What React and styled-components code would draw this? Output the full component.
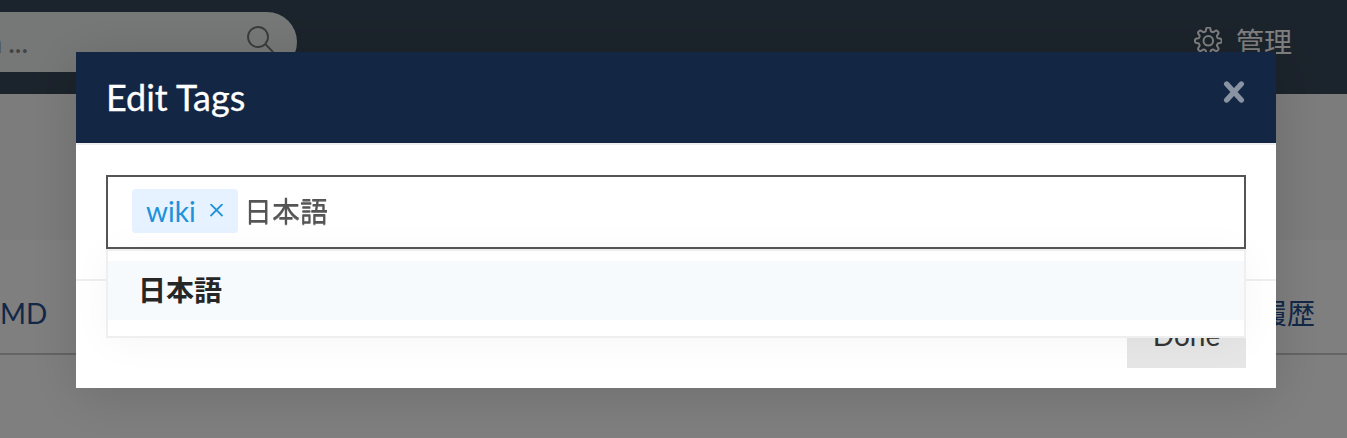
import React from 'react';
import styled, { createGlobalStyle } from 'styled-components';

const GlobalStyle = createGlobalStyle`
  * { box-sizing: border-box; }
  body { margin: 0; background: #fff; overflow: hidden; }
  body, button, input { font-family: Lato, "Noto Sans CJK JP", sans-serif; font-size: 28px; }
`;

const Page = styled.div`
  height: 438px;
  overflow: hidden;
  background: #fff;
`;
const NavBar = styled.header`
  height: 94px;
  display: flex;
  justify-content: space-between;
  align-items: flex-start;
  padding: 12px 55px 0 0;
  background: #374758;
`;
const SearchBox = styled.div`
  width: 297px;
  height: 60px;
  border-radius: 0 30px 30px 0;
  background: #ebf1ed;
  display: flex;
  justify-content: space-between;
  align-items: center;
  padding-right: 22px;
  color: #858585;
`;
const SearchHint = styled.span`
  margin-left: -84px;
  width: 112px;
  text-align: right;
  white-space: nowrap;
  line-height: 34px;
  font-weight: 500;
  word-spacing: -1px;
`;
const AdminLink = styled.a`
  display: flex;
  align-items: center;
  gap: 14px;
  height: 60px;
  color: #fff;
  line-height: 40px;
`;
const Hero = styled.div`
  height: 146px;
  background: #f8f8f8;
`;
const Tabs = styled.nav`
  height: 115px;
  border-bottom: 2px solid #c8c8c8;
  display: flex;
  justify-content: space-between;
  align-items: center;
  padding: 32px 32px 0 0;
  color: #264e8f;
`;
const Tab = styled.a`
  line-height: 40px;
  margin-left: ${(p) => p.$shift || 0}px;
`;
const Overlay = styled.div`
  position: fixed;
  inset: 0;
  background: rgba(0, 0, 0, 0.5);
  padding: 52px 71px 0 76px;
`;
const Modal = styled.section`
  width: 1200px;
  height: 336px;
  display: flex;
  flex-direction: column;
  background: #fff;
  box-shadow: 0 8px 50px rgba(0, 0, 0, 0.14);
`;
const ModalHeader = styled.div`
  height: 93px;
  display: flex;
  justify-content: space-between;
  align-items: flex-start;
  padding: 21px 30px 0;
  background: #132744;
  border-bottom: 2px solid #efefef;
`;
const Title = styled.h2`
  margin: 0;
  font-size: 36px;
  line-height: 48px;
  font-weight: 400;
  color: #fff;
  -webkit-text-stroke: 0.3px #fff;
`;
const CloseButton = styled.button`
  margin: 7px 0 0;
  padding: 0;
  border: 0;
  background: none;
  color: #8993a1;
  line-height: 0;
`;
const ModalBody = styled.div`
  height: 136px;
  padding: 30px;
  border-bottom: 2px solid #efefef;
`;
const Field = styled.div`
  position: relative;
`;
const TagInput = styled.div`
  height: 74px;
  display: flex;
  align-items: center;
  padding: 0 24px 2px;
  border: 2px solid #555;
  background: #fff;
`;
const Tag = styled.span`
  height: 44px;
  width: 106px;
  display: flex;
  align-items: center;
  justify-content: space-between;
  padding: 0 15px 0 14px;
  border-radius: 4px;
  background: #e6f2ff;
  color: #1d91da;
`;
const Typed = styled.span`
  margin-left: 6px;
  line-height: 40px;
  color: #555;
  text-shadow: 0 1px 0 rgba(85, 85, 85, 0.75);
`;
const Menu = styled.div`
  position: absolute;
  top: 74px;
  left: 0;
  right: 0;
  height: 89px;
  padding-top: 10px;
  border: 2px solid #efefef;
  background: #fff;
  box-shadow: 0 4px 40px rgba(0, 0, 0, 0.04);
`;
const Option = styled.div`
  height: 59px;
  padding: 0 30px;
  line-height: 58px;
  font-weight: 700;
  color: #262626;
  background: #f6fafd;
`;
const ModalFooter = styled.div`
  flex: 1;
  display: flex;
  justify-content: flex-end;
  align-items: flex-end;
  padding: 0 30px 20px;
`;
const DoneButton = styled.button`
  width: 119px;
  height: 66px;
  padding: 0 0 1px;
  border: 0;
  background: #e6e6e6;
  color: #333;
`;

const SearchIcon = () => (
  <svg width="28" height="32" viewBox="0 0 28 32" fill="none" stroke="#777" strokeWidth="1.9">
    <circle cx="11" cy="11" r="10" />
    <path d="M18.2 18 L27.5 27.5" />
  </svg>
);
const gearPath = (() => {
  const pts = [];
  for (let i = 0; i <= 160; i += 1) {
    const a = (i / 160) * Math.PI * 2;
    const r = 11.5 + 1.9 * Math.tanh(2 * Math.cos(8 * a));
    pts.push(`${(16.3 + r * Math.sin(a)).toFixed(2)} ${(13.8 - r * Math.cos(a)).toFixed(2)}`);
  }
  return `M${pts.join('L')}Z`;
})();
const GearIcon = () => (
  <svg width="30" height="30" viewBox="0 0 30 30" fill="none" stroke="#fff" strokeWidth="2" strokeLinejoin="round">
    <path d={gearPath} />
    <circle cx="16.3" cy="13.8" r="4.8" />
  </svg>
);
const CloseIcon = () => (
  <svg width="24" height="24" viewBox="0 0 24 24" fill="none" stroke="currentColor" strokeWidth="5.4" strokeLinecap="round">
    <path d="M4.7 4 L19.3 20 M19.3 4 L4.7 20" />
  </svg>
);
const RemoveIcon = () => (
  <svg width="13" height="14" viewBox="0 0 13 14" stroke="currentColor" strokeWidth="1.8">
    <path d="M.5 0 L12.5 12 M12.5 0 L.5 12" />
  </svg>
);

export default function App() {
  return (
    <>
      <GlobalStyle />
      <Page>
        <NavBar>
          <SearchBox>
            <SearchHint>Search ...</SearchHint>
            <SearchIcon />
          </SearchBox>
          <AdminLink><GearIcon />管理</AdminLink>
        </NavBar>
        <Hero />
        <Tabs>
          <Tab $shift={-20}>&amp;MD</Tab>
          <Tab>履歴</Tab>
        </Tabs>
      </Page>
      <Overlay>
        <Modal>
          <ModalHeader>
            <Title>Edit Tags</Title>
            <CloseButton aria-label="Close"><CloseIcon /></CloseButton>
          </ModalHeader>
          <ModalBody>
            <Field>
              <TagInput>
                <Tag>wiki<RemoveIcon /></Tag>
                <Typed>日本語</Typed>
              </TagInput>
              <Menu><Option>日本語</Option></Menu>
            </Field>
          </ModalBody>
          <ModalFooter><DoneButton>Done</DoneButton></ModalFooter>
        </Modal>
      </Overlay>
    </>
  );
}
